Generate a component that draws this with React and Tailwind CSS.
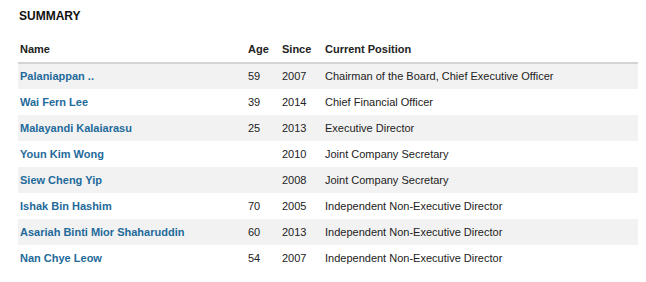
const rows = [
  { name: 'Palaniappan ..', age: '59', since: '2007', position: 'Chairman of the Board, Chief Executive Officer' },
  { name: 'Wai Fern Lee', age: '39', since: '2014', position: 'Chief Financial Officer' },
  { name: 'Malayandi Kalaiarasu', age: '25', since: '2013', position: 'Executive Director' },
  { name: 'Youn Kim Wong', age: '', since: '2010', position: 'Joint Company Secretary' },
  { name: 'Siew Cheng Yip', age: '', since: '2008', position: 'Joint Company Secretary' },
  { name: 'Ishak Bin Hashim', age: '70', since: '2005', position: 'Independent Non-Executive Director' },
  { name: 'Asariah Binti Mior Shaharuddin', age: '60', since: '2013', position: 'Independent Non-Executive Director' },
  { name: 'Nan Chye Leow', age: '54', since: '2007', position: 'Independent Non-Executive Director' },
];

export default function App() {
  return (
    <div className="w-[646px] h-[282px] bg-white px-[18px] pt-[9px] font-['Liberation_Sans',Arial,sans-serif] text-[#222]">
      <h2 className="text-[12px] font-bold leading-[14px] pl-px text-[#111]">SUMMARY</h2>
      <table className="w-[620px] mt-[14px] border-collapse text-[11px] table-fixed">
        <thead>
          <tr className="h-[26px] border-b-2 border-[#d4d4d4] text-left font-bold">
            <th className="w-[228px] pl-[2px] font-bold">Name</th>
            <th className="w-[34px] pl-[2px] font-bold">Age</th>
            <th className="w-[43px] pl-[2px] font-bold">Since</th>
            <th className="pl-[2px] font-bold">Current Position</th>
          </tr>
        </thead>
        <tbody>
          {rows.map((r, i) => (
            <tr key={r.name} className={`h-[26px] ${i % 2 === 0 ? 'bg-[#f2f2f2]' : 'bg-white'}`}>
              <td className="pl-[2px]">
                <a href="#" className="font-bold text-[#1f6a9a]">{r.name}</a>
              </td>
              <td className="pl-[2px]">{r.age}</td>
              <td className="pl-[2px]">{r.since}</td>
              <td className="pl-[2px]">{r.position}</td>
            </tr>
          ))}
        </tbody>
      </table>
    </div>
  );
}
